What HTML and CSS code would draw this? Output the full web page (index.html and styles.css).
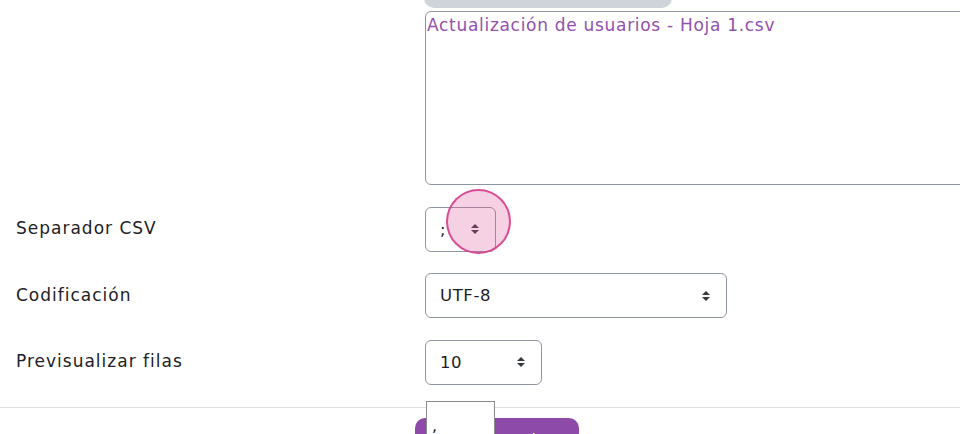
FILE: index.html
```html
<!DOCTYPE html>
<html lang="es">
<head>
<meta charset="utf-8">
<title>Subir usuarios</title>
<link rel="stylesheet" href="styles.css">
</head>
<body>
<div class="page">
  <div class="top-row">
    <div class="label-col"></div>
    <div class="field-col">
      <div class="filebar"></div>
      <div class="preview">Actualización de usuarios - Hoja 1.csv</div>
    </div>
  </div>
  <div class="row">
    <div class="label-col"><span class="label">Separador CSV</span></div>
    <div class="field-col">
      <div class="select select-sep">
        <span>;</span>
        <svg class="caret" width="8" height="10" viewBox="0 0 8 10"><path d="M4 0 L8 4 H0 Z M0 6 H8 L4 10 Z" fill="#343a40"/></svg>
        <div class="highlight"></div>
      </div>
    </div>
  </div>
  <div class="row">
    <div class="label-col"><span class="label">Codificación</span></div>
    <div class="field-col">
      <div class="select select-enc">
        <span>UTF-8</span>
        <svg class="caret" width="8" height="10" viewBox="0 0 8 10"><path d="M4 0 L8 4 H0 Z M0 6 H8 L4 10 Z" fill="#343a40"/></svg>
      </div>
    </div>
  </div>
  <div class="row">
    <div class="label-col"><span class="label">Previsualizar filas</span></div>
    <div class="field-col">
      <div class="select select-rows">
        <span>10</span>
        <svg class="caret" width="8" height="10" viewBox="0 0 8 10"><path d="M4 0 L8 4 H0 Z M0 6 H8 L4 10 Z" fill="#343a40"/></svg>
      </div>
    </div>
  </div>
  <div class="footer">
    <div class="label-col"></div>
    <div class="field-col footer-field">
      <button class="btn-primary">Subir usuarios</button>
      <div class="dropdown-list"><span>,</span></div>
    </div>
  </div>
</div>
</body>
</html>
```
FILE: styles.css
```css
html, body {
  margin: 0;
  padding: 0;
  background: #fff;
  overflow: hidden;
}
body {
  font-family: "DejaVu Sans", "Noto Sans", sans-serif;
  font-size: 15px;
  color: #1d2125;
  width: 960px;
  height: 434px;
}
.page {
  width: 960px;
}
.top-row, .row, .footer {
  display: flex;
}
.label-col {
  width: 425px;
  flex: none;
  box-sizing: border-box;
  padding-left: 16px;
}
.field-col {
  flex: 1;
  position: relative;
}
.filebar {
  position: absolute;
  left: -1px;
  top: -12px;
  width: 248px;
  height: 20px;
  background: #ced4da;
  border-radius: 10px;
}
.preview {
  margin-top: 11px;
  height: 174px;
  box-sizing: border-box;
  width: 545px;
  border: 1px solid #8f959e;
  border-radius: 6px;
  padding: 1px 0 0 1px;
  color: #9251ae;
  font-size: 17px;
  letter-spacing: 0.7px;
  line-height: 24px;
}
.row {
  margin-top: 21.5px;
  height: 45px;
  align-items: center;
}
.row .label {
  font-size: 17px;
  letter-spacing: 1px;
  position: relative;
  top: -1px;
}
.select {
  position: relative;
  height: 45px;
  box-sizing: border-box;
  border: 1px solid #8f959e;
  border-radius: 6px;
  display: flex;
  align-items: center;
  padding: 0 16px 0 14px;
  justify-content: space-between;
  font-size: 16.5px;
  letter-spacing: 0.6px;
}
.select-sep {
  width: 71px;
}
.select-enc {
  width: 302px;
}
.select-rows {
  width: 117px;
}
.caret {
  flex: none;
}
.highlight {
  position: absolute;
  left: 20px;
  top: -19px;
  width: 65px;
  height: 65px;
  box-sizing: border-box;
  border-radius: 50%;
  border: 2px solid rgba(214, 61, 140, 0.9);
  background: rgba(224, 90, 155, 0.28);
}
.footer {
  margin-top: 22px;
  border-top: 1px solid #dee2e6;
  height: 40px;
}
.footer-field {
  position: relative;
}
.btn-primary {
  position: absolute;
  left: -10px;
  top: 10px;
  width: 164px;
  height: 44px;
  border: none;
  border-radius: 10px;
  background: #8d4aa8;
  color: #fff;
  font-family: inherit;
  font-size: 16px;
  padding: 0;
  text-align: center;
  line-height: 30px;
}
.dropdown-list {
  position: absolute;
  left: 1px;
  top: -7px;
  width: 69px;
  height: 40px;
  box-sizing: border-box;
  background: #fff;
  border: 1px solid #8a8a8a;
  padding: 14px 0 0 5px;
  font-size: 16px;
  color: #1d2125;
}
```
